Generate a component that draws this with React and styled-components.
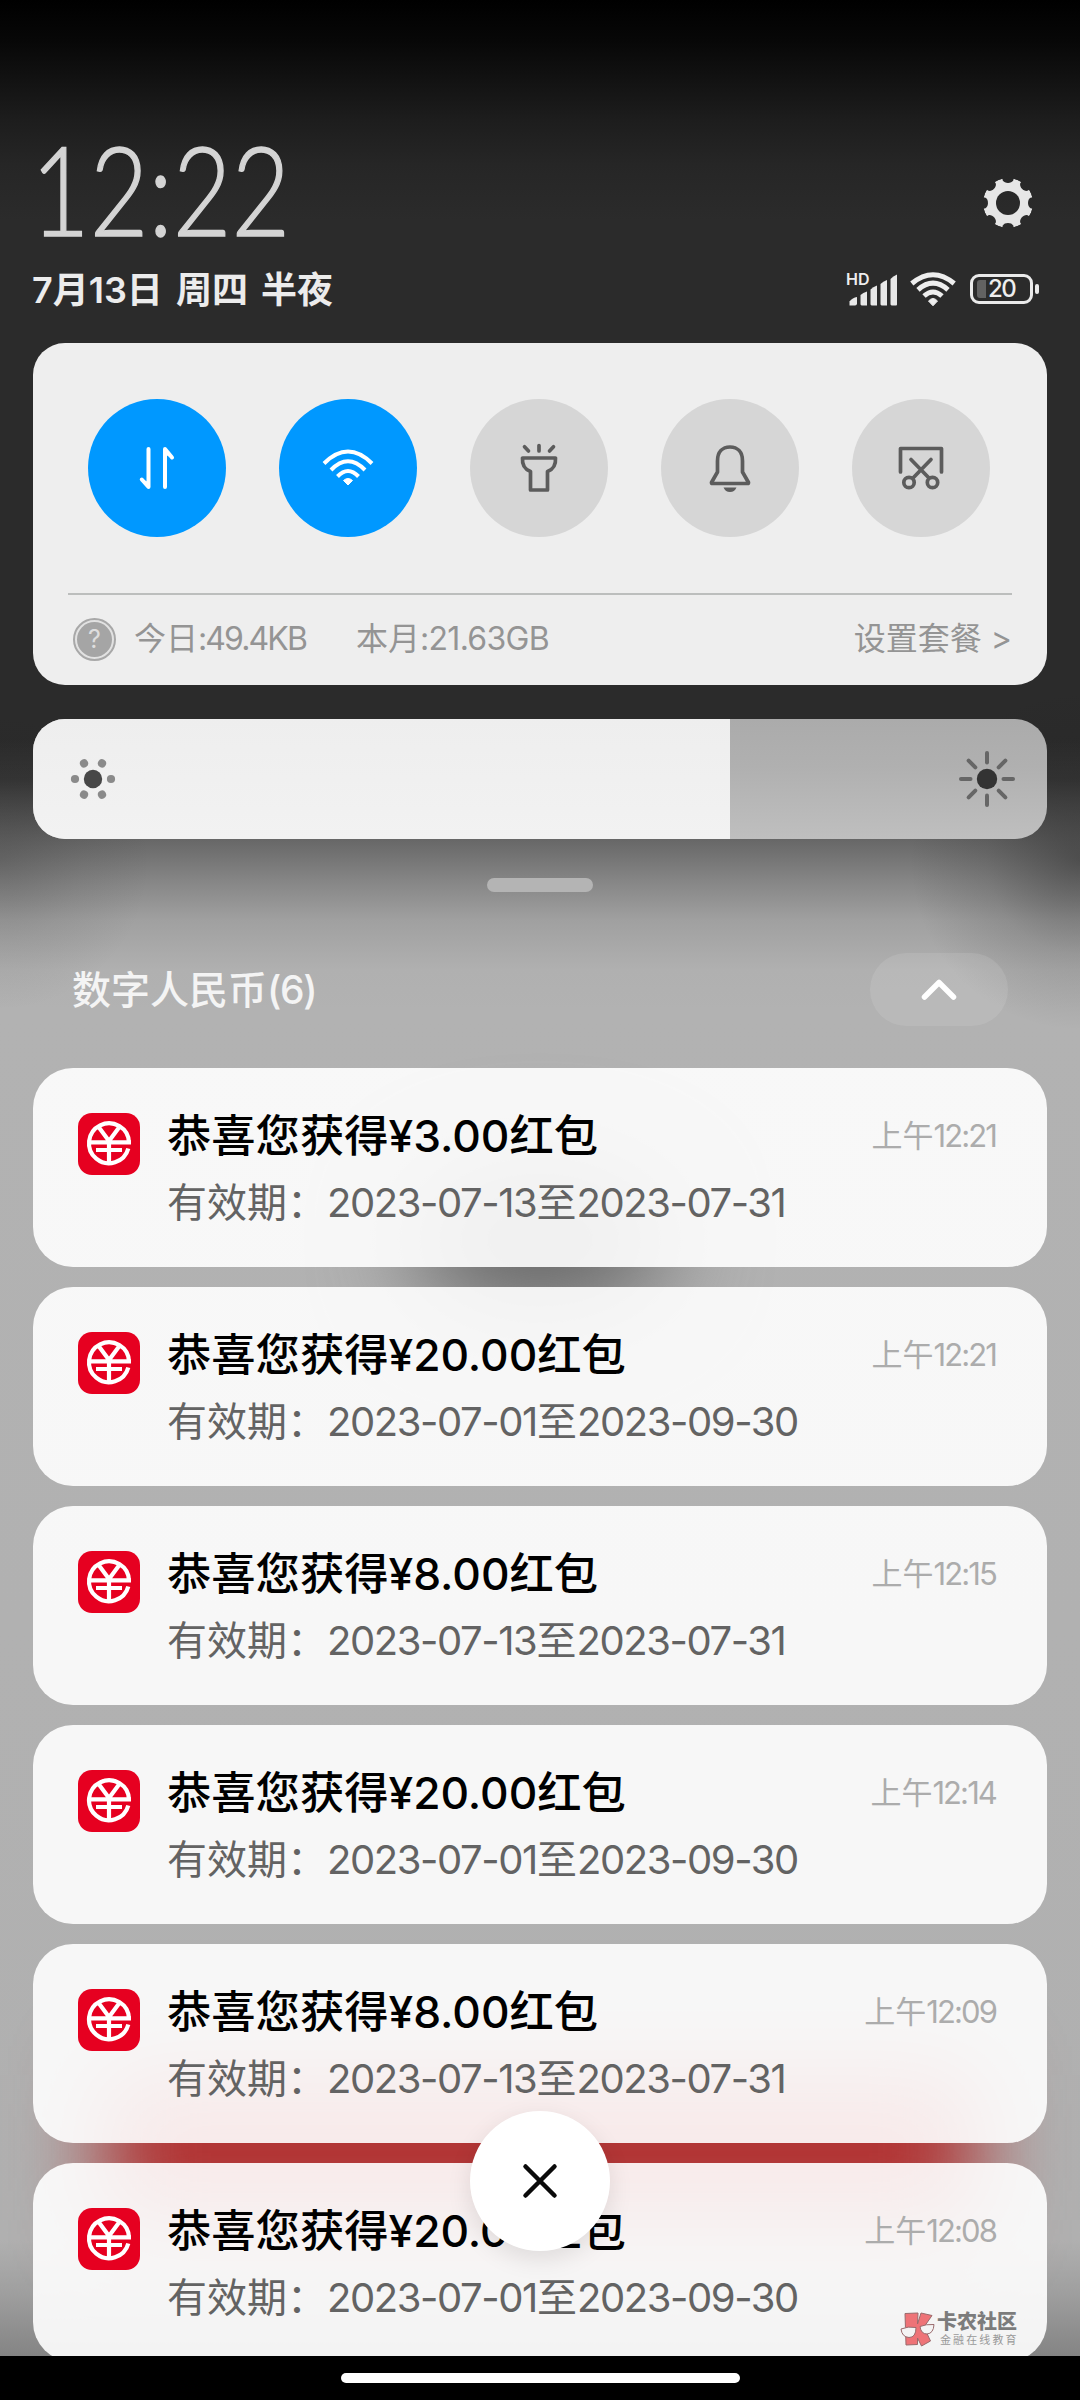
import React from 'react';
import styled, { createGlobalStyle } from 'styled-components';

const notifications = [
  { amount: '3.00', from: '2023-07-13', to: '2023-07-31', time: '12:21' },
  { amount: '20.00', from: '2023-07-01', to: '2023-09-30', time: '12:21' },
  { amount: '8.00', from: '2023-07-13', to: '2023-07-31', time: '12:15' },
  { amount: '20.00', from: '2023-07-01', to: '2023-09-30', time: '12:14' },
  { amount: '8.00', from: '2023-07-13', to: '2023-07-31', time: '12:09' },
  { amount: '20.00', from: '2023-07-01', to: '2023-09-30', time: '12:08' },
];

const GearIcon = () => {
  const cuts = [0, 45, 90, 135, 180, 225, 270, 315];
  return (
    <svg width='52' height='52' viewBox='-26 -26 52 52'>
      <mask id='gear'>
        <circle r='25' fill='#fff' />
        <circle r='12' fill='#000' />
        {cuts.map((a) => (
          <path
            key={a}
            d='M-6 -26 L-5.200 -22.500 C-3.500 -19.200 3.500 -19.200 5.200 -22.500 L6 -26Z'
            fill='#000'
            transform={`rotate(${a})`}
          />
        ))}
      </mask>
      <circle r='25' fill='#e6e6e6' mask='url(#gear)' />
    </svg>
  );
};

const SignalIcon = () => (
  <svg width='52' height='36' viewBox='0 0 52 36'>
    <g fill='#e8e8e8'>
      <path d='M1.500 34.500V30.500Q4.500 26.500 9 26V32.500Q9 34.500 7 34.500Z' />
      <path d='M12.500 33.500V24Q15 21.500 19 20.500V34.500H13.500Z' />
      <path d='M22.500 33.500V18.500Q25 16 29 14.500V34.500H23.500Z' />
      <path d='M32.500 33.500V13Q35 10.500 39 9V34.500H33.500Z' />
      <path d='M42.500 33.500V8Q45 5 49 3.500V33.500Q49 34.500 48 34.500H43.500Z' />
    </g>
  </svg>
);

const StatusWifiIcon = () => (
  <svg width='46' height='36' viewBox='0 0 46 36'>
    <g fill='none' stroke='#eee' strokeWidth='5'>
      <path d='M1.800 12.500Q23 -5 44.200 12.500' />
      <path d='M8 18.800Q23 5.500 38 18.800' />
      <path d='M14 25Q23 17 32 25' />
    </g>
    <path d='M18.500 30Q23 25 27.500 30L23 34.800Z' fill='#eee' stroke='#eee' />
  </svg>
);

const DataIcon = () => (
  <svg width='40' height='48' viewBox='0 0 40 48'>
    <g
      fill='none'
      stroke='#fff'
      strokeWidth='4'
      strokeLinecap='round'
      strokeLinejoin='round'
    >
      <path d='M11.500 5V43L4.800 35.500' />
      <path d='M28 43V5L35 13.500' />
    </g>
    <path d='M13 44L3 34L13 39ZM27 4L37 15L27 10Z' fill='#fff' />
  </svg>
);

const WifiIcon = () => (
  <svg width='52' height='38' viewBox='0 0 52 38'>
    <g fill='none' stroke='#fff' strokeWidth='4'>
      <path d='M2 14.500Q26 -9.500 50 14.500' />
      <path d='M9 21Q26 3.500 43 21' />
      <path d='M15.500 27.500Q26 16.500 36.500 27.500' />
    </g>
    <path
      d='M21.500 31.500Q26 27.500 30.500 31.500L26 36Z'
      fill='#fff'
      stroke='#fff'
      strokeLinejoin='round'
    />
  </svg>
);

const lineProps = {
  fill: 'none',
  stroke: '#5c5c5c',
  strokeWidth: 3.7,
  strokeLinecap: 'round',
  strokeLinejoin: 'round',
};

const TorchIcon = () => (
  <svg width='42' height='50' viewBox='0 0 42 50' {...lineProps}>
    <path d='M21 2.500V8M6.500 3.800L10.500 8M35.500 3.800L31.500 8' />
    <path d='M4.500 15H37.500C38 22 35 26.500 29.500 28.500V47H12.500V28.500C7 26.500 4 22 4.500 15Z' />
  </svg>
);

const BellIcon = () => (
  <svg width='44' height='50' viewBox='0 0 44 50'>
    <path
      {...lineProps}
      d='M3.500 39.500L9.500 29V18C9.500 9 14.500 4 22 4S34.500 9 34.500 18V29L40.500 39.500Q40.500 40.500 39.500 40.500H4.500Q3.500 40.500 3.500 39.500Z'
    />
    <path d='M15.500 44.500H28.500Q26.500 49 22 49T15.500 44.500Z' fill='#5c5c5c' />
  </svg>
);

const ScissorsIcon = () => (
  <svg width='48' height='46' viewBox='0 0 48 46' {...lineProps}>
    <path d='M3.500 27V3.500H44.500V27' />
    <path d='M14 14.500L31.500 32.500M34 14.500L16.500 32.500' />
    <circle cx='12' cy='37.500' r='5.200' />
    <circle cx='35.500' cy='37.500' r='5.200' />
  </svg>
);

const DimIcon = () => (
  <svg width='46' height='44' viewBox='-23 -22 46 44'>
    <circle r='9.200' fill='#474747' />
    {[0, 60, 120, 180, 240, 300].map((a) => (
      <circle key={a} cx='18' r='4.100' fill='#8a8a8a' transform={`rotate(${a})`} />
    ))}
  </svg>
);

const SunIcon = () => (
  <svg width='56' height='58' viewBox='-28 -29 56 58'>
    <circle r='10.200' fill='#333' />
    {[0, 45, 90, 135, 180, 225, 270, 315].map((a) => (
      <path
        key={a}
        d='M16.500 0H26'
        stroke='#666'
        strokeWidth='4'
        strokeLinecap='round'
        transform={`rotate(${a})`}
      />
    ))}
  </svg>
);

const YuanIcon = () => (
  <svg width='62' height='62' viewBox='0 0 62 62'>
    <rect width='62' height='62' rx='14' fill='#e60020' />
    <g fill='none' stroke='#fff' strokeWidth='4.200'>
      <path d='M50.300 35.500A20 20 0 1 1 51 29.500' />
      <path d='M21 14.500L31 28L41 14.500M31 27V50M12 29.300H53M18 37H44' />
    </g>
  </svg>
);

const KanongLogo = () => (
  <svg width='36' height='36' viewBox='0 0 36 36'>
    <g stroke='#9a6a6c' strokeWidth='1'>
      <path
        d='M5 1.500L18 1L17.500 12L21 1L32 3.500L24 15L30.500 29L21.500 34L17.500 26V32.500L6 33Z'
        fill='#ee7377'
      />
      <path d='M1 17Q8 14 16 15.500Q16 25.500 9 25.500Q2 25 1 17Z' fill='#f4f4f4' />
      <path d='M20 14.500Q26 12 34 12.500Q33.500 21.500 27 22Q21 22 20 14.500Z' fill='#f4f4f4' />
    </g>
  </svg>
);

const toggles = [
  { id: 'data', on: true, icon: <DataIcon /> },
  { id: 'wifi', on: true, icon: <WifiIcon /> },
  { id: 'torch', on: false, icon: <TorchIcon /> },
  { id: 'bell', on: false, icon: <BellIcon /> },
  { id: 'shot', on: false, icon: <ScissorsIcon /> },
];

const App = () => {
  return (
    <>
      <GlobalStyle />
      <StyledScreen>
        <StyledHeader>
          <StyledTopRow>
            <StyledClock>12:22</StyledClock>
            <GearIcon />
          </StyledTopRow>
          <StyledStatusRow>
            <StyledDate>7月13日 周四 半夜</StyledDate>
            <StyledStatusIcons>
              <StyledSignal>
                <SignalIcon />
                <span>HD</span>
              </StyledSignal>
              <StatusWifiIcon />
              <StyledBattery>
                <div className='body'>
                  <i />
                  <span>20</span>
                </div>
                <b />
              </StyledBattery>
            </StyledStatusIcons>
          </StyledStatusRow>
        </StyledHeader>

        <StyledControls>
          <StyledToggles>
            {toggles.map((t) => (
              <StyledToggle key={t.id} $on={t.on}>
                {t.icon}
              </StyledToggle>
            ))}
          </StyledToggles>
          <StyledUsage>
            <StyledHelp>
              <span>?</span>
            </StyledHelp>
            <StyledToday>
              今日<span>:49.4KB</span>
            </StyledToday>
            <StyledMonth>
              本月<span>:21.63GB</span>
            </StyledMonth>
            <StyledPlan>设置套餐 &gt;</StyledPlan>
          </StyledUsage>
        </StyledControls>

        <StyledSlider>
          <StyledFill>
            <DimIcon />
          </StyledFill>
          <SunIcon />
        </StyledSlider>
        <StyledHandle />

        <StyledGroupHeader>
          <h2>
            数字人民币<span>(6)</span>
          </h2>
          <StyledCollapse>
            <svg width='38' height='24' viewBox='0 0 38 24'>
              <path
                d='M4.500 19L19 4.500L33.500 19'
                fill='none'
                stroke='#fff'
                strokeWidth='5.500'
                strokeLinecap='round'
                strokeLinejoin='round'
              />
            </svg>
          </StyledCollapse>
        </StyledGroupHeader>

        <StyledList>
          {notifications.map((n, i) => (
            <StyledCard key={i}>
              <YuanIcon />
              <StyledText>
                <StyledTitle>恭喜您获得¥{n.amount}红包</StyledTitle>
                <StyledBody>
                  有效期：<span>{n.from}</span>至<span>{n.to}</span>
                </StyledBody>
              </StyledText>
              <StyledTime>
                上午<span>{n.time}</span>
              </StyledTime>
            </StyledCard>
          ))}
        </StyledList>

        <StyledClose>
          <svg width='38' height='38' viewBox='0 0 38 38'>
            <path
              d='M4.500 4.500L33.500 33.500M33.500 4.500L4.500 33.500'
              stroke='#0a0a0a'
              strokeWidth='4.500'
              strokeLinecap='round'
            />
          </svg>
        </StyledClose>
        <StyledBadge>
          <KanongLogo />
          <div>
            <strong>卡农社区</strong>
            <small>金融在线教育</small>
          </div>
        </StyledBadge>
        <StyledNavBar>
          <i />
        </StyledNavBar>
      </StyledScreen>
    </>
  );
};

const GlobalStyle = createGlobalStyle`
  * {
    box-sizing: border-box;
    margin: 0;
    padding: 0;
  }
  body {
    background: #000;
    font-family: Inter, 'Noto Sans CJK SC', sans-serif;
  }
  svg {
    display: block;
    flex: none;
  }
`;

// blurred wallpaper: red banner, dark spot, then the vertical shade
const StyledScreen = styled.div`
  position: relative;
  display: flex;
  flex-direction: column;
  width: 1080px;
  height: 2400px;
  overflow: hidden;
  background: radial-gradient(
      ellipse 150px 150px at 0 860px,
      rgba(30, 30, 30, 0.22),
      rgba(30, 30, 30, 0.08) 55%,
      transparent
    ),
    radial-gradient(
      ellipse 170px 170px at 1080px 860px,
      rgba(30, 30, 30, 0.45),
      rgba(30, 30, 30, 0.14) 55%,
      transparent
    ),
    linear-gradient(
      #000 0,
      #070707 40px,
      #1d1d1d 120px,
      #262626 165px,
      #2b2b2b 220px,
      #2b2b2b 740px,
      #363636 780px,
      #666 838px,
      #858585 880px,
      #a0a0a0 920px,
      #b0b0b0 970px,
      #b2b2b2 1010px,
      #b0b0b0 2240px,
      #a0a0a0 2290px,
      #848484 2356px
    );
  &::before {
    content: '';
    position: absolute;
    left: 105px;
    top: 2075px;
    width: 870px;
    height: 145px;
    background: #b22a2a;
    filter: blur(44px);
  }
  &::after {
    content: '';
    position: absolute;
    left: 410px;
    top: 1165px;
    width: 260px;
    height: 150px;
    border-radius: 50%;
    background: #666;
    filter: blur(48px);
  }
  > * {
    z-index: 1;
  }
`;

const StyledHeader = styled.header`
  height: 343px;
  padding: 125px 41px 0 31px;
  flex: none;
`;

const StyledTopRow = styled.div`
  display: flex;
  justify-content: space-between;
  height: 126px;
  svg {
    margin: 52px 5px 0 0;
  }
`;

const StyledClock = styled.div`
  font-family: Lato, sans-serif;
  font-weight: 300;
  font-size: 125px;
  line-height: 126px;
  color: #d4d4d4;
  -webkit-text-stroke: 1.5px #d4d4d4;
  transform: scaleX(0.81);
  transform-origin: left;
`;

const StyledStatusRow = styled.div`
  display: flex;
  justify-content: space-between;
  align-items: center;
  height: 76px;
`;

const StyledDate = styled.div`
  margin-top: -4px;
  padding-left: 1px;
  font-size: 36px;
  font-weight: 600;
  word-spacing: 4px;
  color: #ececec;
  white-space: pre;
`;

const StyledStatusIcons = styled.div`
  display: flex;
  align-items: center;
  gap: 10px;
`;

const StyledSignal = styled.div`
  position: relative;
  span {
    position: absolute;
    left: -2px;
    top: 0;
    font-size: 16px;
    line-height: 16px;
    font-weight: 600;
    color: #eee;
  }
`;

const StyledBattery = styled.div`
  display: flex;
  align-items: center;
  gap: 2px;
  margin-left: 4px;
  .body {
    display: flex;
    align-items: center;
    width: 63px;
    height: 30px;
    padding-left: 4px;
    border: 3px solid #eaeaea;
    border-radius: 9px;
  }
  i {
    width: 9px;
    height: 18px;
    border-radius: 3px 0 0 3px;
    background: #626262;
  }
  span {
    margin-left: 2px;
    font-size: 24px;
    line-height: 24px;
    font-weight: 500;
    letter-spacing: -1.500px;
    color: #eee;
  }
  b {
    width: 4px;
    height: 10px;
    border-radius: 2px;
    background: #eaeaea;
  }
`;

const StyledControls = styled.section`
  flex: none;
  height: 342px;
  margin: 0 33px;
  padding: 56px 35px 0;
  border-radius: 32px;
  background: #eee;
`;

const StyledToggles = styled.div`
  display: flex;
  justify-content: space-between;
  height: 194px;
  padding: 0 22px 0 20px;
`;

const StyledToggle = styled.div`
  display: flex;
  align-items: center;
  justify-content: center;
  width: 138px;
  height: 138px;
  border-radius: 50%;
  background: ${(props) => (props.$on ? '#0098ff' : '#d6d6d6')};
`;

const StyledUsage = styled.div`
  display: flex;
  align-items: center;
  height: 90px;
  padding-left: 5px;
  border-top: 2px solid #bcbebd;
  font-size: 32px;
  line-height: 46px;
  color: #949494;
`;

const StyledHelp = styled.div`
  width: 43px;
  height: 43px;
  padding: 2px;
  border: 2px solid #a8a8a8;
  border-radius: 50%;
  background: #e2e2e2;
  span {
    display: block;
    height: 35px;
    border-radius: 50%;
    background: #a5a5a5;
    color: #dedede;
    font-size: 25px;
    line-height: 35px;
    text-align: center;
  }
`;

const StyledToday = styled.div`
  width: 222px;
  margin-left: 18px;
  span {
    letter-spacing: -1.900px;
  }
`;

const StyledMonth = styled.div`
  flex: 1;
  span {
    letter-spacing: -0.700px;
  }
`;

const StyledPlan = styled.div`
  white-space: pre;
`;

const StyledSlider = styled.div`
  flex: none;
  display: flex;
  align-items: center;
  justify-content: space-between;
  height: 120px;
  margin: 34px 33px 0;
  padding-right: 32px;
  border-radius: 32px;
  overflow: hidden;
  background: linear-gradient(#ababab, #b0b0b0 40%, #bfbfbf);
`;

const StyledFill = styled.div`
  display: flex;
  align-items: center;
  width: 697px;
  height: 100%;
  padding-left: 37px;
  background: linear-gradient(#eee, #f2f2f2);
`;

const StyledHandle = styled.div`
  flex: none;
  width: 106px;
  height: 14px;
  margin: 39px auto 0;
  border-radius: 7px;
  background: #b4b4b4;
`;

const StyledGroupHeader = styled.div`
  flex: none;
  display: flex;
  align-items: center;
  justify-content: space-between;
  height: 73px;
  margin: 61px 72px 42px 72px;
  h2 {
    margin-top: -6px;
    font-size: 39px;
    font-weight: 500;
    color: #f4f4f4;
  }
  span {
    letter-spacing: -1.300px;
  }
`;

const StyledCollapse = styled.div`
  display: flex;
  align-items: center;
  justify-content: center;
  width: 138px;
  height: 73px;
  border-radius: 37px;
  background: rgba(255, 255, 255, 0.1);
`;

const StyledList = styled.div`
  display: flex;
  flex-direction: column;
  gap: 20px;
  margin: 0 33px;
`;

const StyledCard = styled.div`
  flex: none;
  display: flex;
  height: 199px;
  padding: 45px 51px 0 45px;
  border-radius: 40px;
  background: rgba(255, 255, 255, 0.9);
`;

const StyledText = styled.div`
  flex: 1;
  margin-left: 27px;
`;

const StyledTitle = styled.div`
  margin-top: -10px;
  font-size: 44.300px;
  line-height: 66px;
  font-weight: 500;
  color: #000;
`;

const StyledBody = styled.div`
  font-size: 40px;
  line-height: 68px;
  color: #636363;
  span {
    letter-spacing: -1.420px;
  }
`;

const StyledTime = styled.div`
  font-size: 31px;
  line-height: 46px;
  color: #acacac;
  span {
    letter-spacing: -1.900px;
  }
`;

const StyledClose = styled.div`
  position: absolute;
  left: 470px;
  top: 2111px;
  display: flex;
  align-items: center;
  justify-content: center;
  width: 140px;
  height: 140px;
  border-radius: 50%;
  background: #fff;
  box-shadow: 0 8px 24px rgba(0, 0, 0, 0.1);
`;

const StyledBadge = styled.div`
  position: absolute;
  left: 900px;
  top: 2312px;
  display: flex;
  gap: 1px;
  strong {
    display: block;
    font-size: 20px;
    line-height: 20px;
    font-weight: 900;
    color: #7c7c7c;
  }
  small {
    display: block;
    margin: 2px 0 0 3px;
    font-size: 11px;
    line-height: 12px;
    letter-spacing: 2.100px;
    color: #999;
    white-space: nowrap;
  }
`;

const StyledNavBar = styled.div`
  position: absolute;
  left: 0;
  bottom: 0;
  width: 100%;
  height: 44px;
  padding-top: 17px;
  background: #000;
  i {
    display: block;
    width: 399px;
    height: 10px;
    margin: 0 auto;
    border-radius: 5px;
    background: #fff;
  }
`;

export default App;
